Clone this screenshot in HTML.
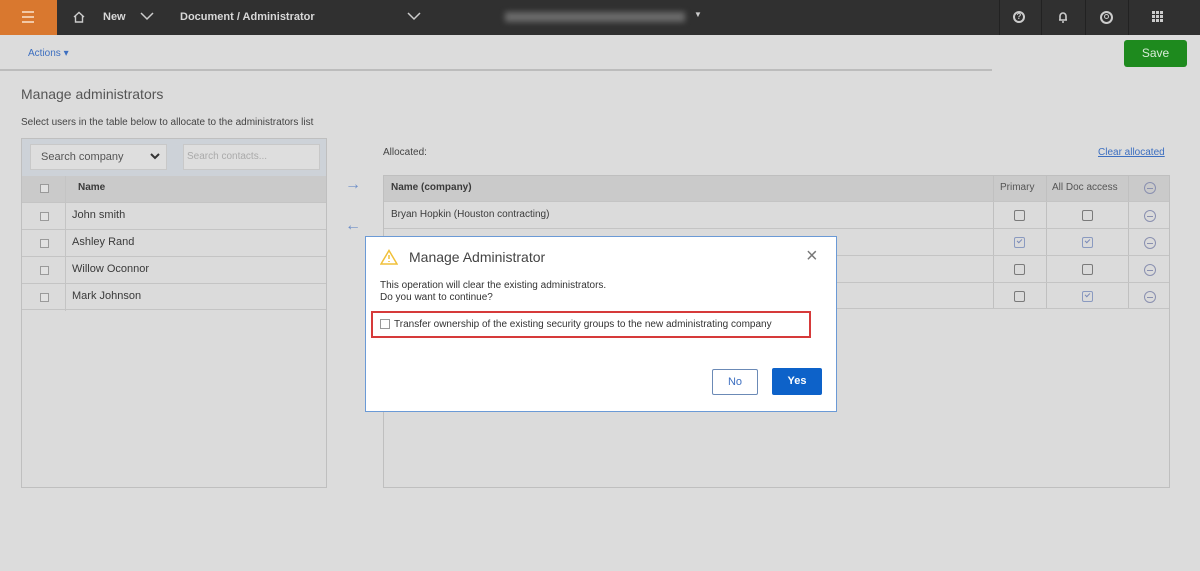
<!DOCTYPE html>
<html><head><style>
*{box-sizing:border-box;margin:0;padding:0}
body{width:1200px;height:571px;background:#dcdcdc;font-family:"Liberation Sans",sans-serif;position:relative;overflow:hidden;color:#3a3a3a}
.a{position:absolute}
.top{left:0;top:0;width:1200px;height:35px;background:#303030}
.t{color:#d8d8d8;font-size:11px;font-weight:bold}
.cb{position:absolute;width:9px;height:9px;border:1px solid #9a9a9a;background:#e2e2e2}
.cb2{position:absolute;width:11px;height:11px;border:1.5px solid #7a7a7a;border-radius:2px}
.ck{border-color:#8a9ac0}
.ck:after{content:"";position:absolute;left:2px;top:1px;width:4px;height:2px;border-left:1.3px solid #7a8ab8;border-bottom:1.3px solid #7a8ab8;transform:rotate(-45deg)}
.row{position:absolute;left:0;width:100%;height:27px;border-top:1px solid #c4c4c4;font-size:11px;line-height:24px}
.min{position:absolute;width:12px;height:12px;border:1px solid #8a90b0;border-radius:50%}
.min:after{content:"";position:absolute;left:2px;top:5px;width:6px;height:1px;background:#8a90b0}
</style></head><body>
<div class="a top"></div>
<div class="a" style="left:0;top:0;width:57px;height:35px;background:#d9782f"></div>
<div class="a" style="left:22px;top:11px;width:12px;height:2px;background:#f2c9a6;box-shadow:0 5px 0 #f2c9a6,0 10px 0 #f2c9a6"></div>
<svg class="a" style="left:73px;top:11px" width="12" height="12" viewBox="0 0 12 12"><path d="M1 6L6 1.5 11 6M2.5 5v6h7V5" fill="none" stroke="#ccc" stroke-width="1.4"/></svg>
<div class="a t" style="left:103px;top:11px">New</div>
<svg class="a" style="left:140px;top:12px" width="14" height="9"><path d="M1 1l6 6 6-6" fill="none" stroke="#ccc" stroke-width="1.5"/></svg>
<div class="a t" style="left:180px;top:11px">Document / Administrator</div>
<svg class="a" style="left:407px;top:12px" width="14" height="9"><path d="M1 1l6 6 6-6" fill="none" stroke="#ccc" stroke-width="1.5"/></svg>
<div class="a" style="left:505px;top:12px;width:180px;height:10px;background:#6a6a6a;filter:blur(3px)"></div>
<div class="a" style="left:694px;top:10px;color:#ccc;font-size:8px">▼</div>
<div class="a" style="left:999px;top:0;width:1px;height:35px;background:#222"></div>
<div class="a" style="left:1041px;top:0;width:1px;height:35px;background:#222"></div>
<div class="a" style="left:1085px;top:0;width:1px;height:35px;background:#222"></div>
<div class="a" style="left:1128px;top:0;width:1px;height:35px;background:#222"></div>
<div class="a" style="left:1013px;top:11px;width:12px;height:12px;border:2px solid #ccc;border-radius:50%;color:#ccc;font-size:8px;font-weight:bold;text-align:center;line-height:8px">?</div>
<svg class="a" style="left:1057px;top:10px" width="12" height="14"><path d="M3 10V6a3 3 0 0 1 6 0v4H2h8M5 12h2" fill="none" stroke="#ccc" stroke-width="1.6"/></svg>
<div class="a" style="left:1100px;top:11px;width:13px;height:13px;border:2px solid #ccc;border-radius:50%"></div>
<div class="a" style="left:1104px;top:14px;width:5px;height:5px;border:1.5px solid #ccc;border-radius:50%"></div>
<div class="a" style="left:1152px;top:11px;width:3px;height:3px;background:#ccc;box-shadow:4px 0 #ccc,8px 0 #ccc,0 4px #ccc,4px 4px #ccc,8px 4px #ccc,0 8px #ccc,4px 8px #ccc,8px 8px #ccc"></div>
<div class="a" style="left:28px;top:48px;font-size:10px;color:#3d6fc0">Actions ▾</div>
<div class="a" style="left:0;top:69px;width:992px;height:2px;background:#bcbcbc"></div>
<div class="a" style="left:1124px;top:40px;width:63px;height:27px;background:#1e8a1e;border-radius:3px;color:#d8ecd8;font-size:12px;text-align:center;line-height:27px">Save</div>
<div class="a" style="left:21px;top:86px;font-size:14px;color:#555">Manage administrators</div>
<div class="a" style="left:21px;top:117px;font-size:10px;color:#444">Select users in the table below to allocate to the administrators list</div>

<div class="a" style="left:21px;top:138px;width:306px;height:350px;border:1px solid #bfbfbf;background:#dbdbdb">
 <div class="a" style="left:0;top:0;width:304px;height:37px;background:#cdd2d8"></div>
 <div class="a" style="left:8px;top:5px;width:137px;height:26px;background:#dedede;border:1px solid #c8c8c8;font-size:11px;color:#555;line-height:24px;padding-left:10px">Search company</div>
 <svg class="a" style="left:128px;top:14px" width="10" height="7"><path d="M1 1l4 4 4-4" fill="none" stroke="#333" stroke-width="2"/></svg>
 <div class="a" style="left:161px;top:5px;width:137px;height:26px;background:#dedede;border:1px solid #c8c8c8;font-size:10px;color:#aaa;line-height:24px;padding-left:3px">Search contacts...</div>
 <div class="a" style="left:0;top:37px;width:304px;height:26px;background:#cacaca"></div>
 <div class="a" style="left:43px;top:37px;width:1px;height:135px;background:#c4c4c4"></div>
 <div class="cb" style="left:18px;top:45px"></div>
 <div class="a" style="left:56px;top:43px;font-size:10px;font-weight:bold">Name</div>
 <div class="row" style="top:63px"><div class="cb" style="left:18px;top:9px"></div><span class="a" style="left:50px">John smith</span></div>
 <div class="row" style="top:90px"><div class="cb" style="left:18px;top:9px"></div><span class="a" style="left:50px">Ashley Rand</span></div>
 <div class="row" style="top:117px"><div class="cb" style="left:18px;top:9px"></div><span class="a" style="left:50px">Willow Oconnor</span></div>
 <div class="row" style="top:144px;border-bottom:1px solid #c4c4c4"><div class="cb" style="left:18px;top:9px"></div><span class="a" style="left:50px">Mark Johnson</span></div>
</div>
<div class="a" style="left:345px;top:176px;color:#6f8fc8;font-size:16px">→</div>
<div class="a" style="left:345px;top:217px;color:#6f8fc8;font-size:16px">←</div>
<div class="a" style="left:383px;top:147px;font-size:10px;color:#444">Allocated:</div>
<div class="a" style="left:1098px;top:147px;font-size:10px;color:#3d6fc0;text-decoration:underline">Clear allocated</div>
<div class="a" style="left:383px;top:175px;width:787px;height:313px;border:1px solid #bfbfbf;background:#dbdbdb">
 <div class="a" style="left:0;top:0;width:785px;height:25px;background:#cacaca"></div>
 <div class="a" style="left:609px;top:0;width:1px;height:133px;background:#c0c0c0"></div>
 <div class="a" style="left:662px;top:0;width:1px;height:133px;background:#c0c0c0"></div>
 <div class="a" style="left:744px;top:0;width:1px;height:133px;background:#c0c0c0"></div>
 <div class="a" style="left:7px;top:6px;font-size:10px;font-weight:bold">Name (company)</div>
 <div class="a" style="left:616px;top:6px;font-size:10px;color:#555">Primary</div>
 <div class="a" style="left:668px;top:6px;font-size:10px;color:#555">All Doc access</div>
 <div class="min" style="left:760px;top:6px"></div>
 <div class="row" style="top:25px"><span class="a" style="left:7px;top:1px;font-size:10px">Bryan Hopkin (Houston contracting)</span><div class="cb2" style="left:630px;top:8px"></div><div class="cb2" style="left:698px;top:8px"></div><div class="min" style="left:760px;top:8px"></div></div>
 <div class="row" style="top:52px"><div class="cb2 ck" style="left:630px;top:8px"></div><div class="cb2 ck" style="left:698px;top:8px"></div><div class="min" style="left:760px;top:8px"></div></div>
 <div class="row" style="top:79px"><div class="cb2" style="left:630px;top:8px"></div><div class="cb2" style="left:698px;top:8px"></div><div class="min" style="left:760px;top:8px"></div></div>
 <div class="row" style="top:106px;border-bottom:1px solid #c4c4c4"><div class="cb2" style="left:630px;top:8px"></div><div class="cb2 ck" style="left:698px;top:8px"></div><div class="min" style="left:760px;top:8px"></div></div>
</div>

<div class="a" style="left:365px;top:236px;width:472px;height:176px;background:#fff;border:1.5px solid #6b9ad6">
 <svg class="a" style="left:14px;top:12px" width="18" height="16"><path d="M9 1.5L17 15H1z" fill="none" stroke="#f0c03a" stroke-width="1.5"/><path d="M9 6v4M9 12v1" stroke="#f0c03a" stroke-width="1.5"/></svg>
 <div class="a" style="left:43px;top:12px;font-size:14px;color:#444">Manage Administrator</div>
 <div class="a" style="left:440px;top:8px;font-size:20px;color:#777;font-weight:300">×</div>
 <div class="a" style="left:14px;top:43px;font-size:10px;line-height:12px;color:#333">This operation will clear the existing administrators.<br>Do you want to continue?</div>
 <div class="a" style="left:5px;top:74px;width:440px;height:27px;border:2px solid #d63a3a"></div>
 <div class="a" style="left:14px;top:82px;width:10px;height:10px;border:1px solid #999"></div>
 <div class="a" style="left:28px;top:82px;font-size:10px;color:#333">Transfer ownership of the existing security groups to the new administrating company</div>
 <div class="a" style="left:346px;top:132px;width:46px;height:26px;border:1px solid #6b8ab6;border-radius:2px;font-size:11px;color:#3d6fc0;text-align:center;line-height:24px">No</div>
 <div class="a" style="left:406px;top:131px;width:50px;height:27px;background:#0d62c9;border-radius:2px;font-size:11px;color:#fff;font-weight:bold;text-align:center;line-height:27px">Yes</div>
</div>
</body></html>
